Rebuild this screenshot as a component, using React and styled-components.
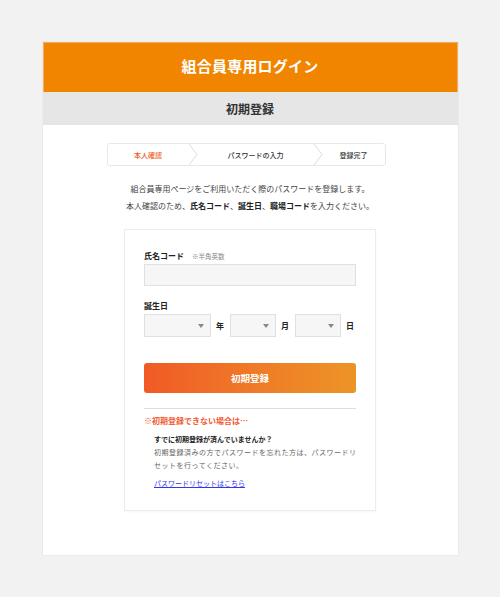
import React from 'react';
import styled, { createGlobalStyle } from 'styled-components';

const GlobalStyle = createGlobalStyle`
  html, body { margin: 0; padding: 0; background: #f2f2f2; }
  body {
    font-family: "Noto Sans CJK JP", "Noto Sans", "Liberation Sans", sans-serif;
    color: #333;
  }
  * { box-sizing: border-box; }
`;

const Page = styled.div`
  padding: 42px 0 42px;
  display: flex;
  justify-content: center;
`;

const Card = styled.main`
  width: 415px;
  background: #fff;
  box-shadow: 0 0 0 1px #ebebeb;
  padding-bottom: 44px;
`;

const Header = styled.header`
  height: 50px;
  background: #f18500;
  box-shadow: inset 1px 1px 0 #f5ad63, inset -1px 0 0 #f5ad63;
  display: flex;
  align-items: center;
  justify-content: center;
  color: #fff;
  font-size: 15px;
  line-height: 20px;
  font-weight: 700;
  letter-spacing: 0.2px;
  padding-bottom: 3px;
`;

const SubHeader = styled.div`
  height: 33px;
  background: #e6e6e6;
  display: flex;
  align-items: center;
  justify-content: center;
  font-size: 12px;
  font-weight: 700;
  color: #333;
`;

const Body = styled.div`
  padding-top: 18px;
  display: flex;
  flex-direction: column;
  align-items: center;
`;

const Steps = styled.ol`
  list-style: none;
  margin: 0 8px 0 0;
  padding: 0;
  width: 279px;
  height: 23px;
  border: 1px solid #e8e8e8;
  border-radius: 3px;
  display: flex;
  align-items: stretch;
  overflow: hidden;
`;

const Step = styled.li`
  width: ${p => p.$w}px;
  display: flex;
  align-items: center;
  justify-content: center;
  font-size: 7px;
  color: ${p => (p.$active ? '#f15a24' : '#333')};
  font-weight: 500;
`;

const ChevronSvg = styled.svg`
  width: 9px;
  height: 21px;
  flex: none;
  display: block;
`;

const Chevron = () => (
  <ChevronSvg viewBox="0 0 9 21" preserveAspectRatio="none">
    <polyline points="0,0 8,10.5 0,21" fill="none" stroke="#dcdcdc" strokeWidth="1" />
  </ChevronSvg>
);

const Intro = styled.p`
  margin: 14px 0 0;
  font-size: 8px;
  line-height: 17px;
  color: #444;
  text-align: center;
  b { font-weight: 700; color: #222; }
`;

const FormCard = styled.section`
  margin-top: 15px;
  width: 252px;
  border: 1px solid #ececec;
  box-shadow: 0 1px 2px rgba(0, 0, 0, 0.04);
  padding: 19px 19px 20px;
`;

const Label = styled.div`
  display: flex;
  align-items: baseline;
  gap: 8px;
  font-size: 8px;
  line-height: 14px;
  font-weight: 700;
  color: #222;
  margin-top: ${p => p.$mt || 0}px;
`;

const Note = styled.span`
  font-size: 6.5px;
  font-weight: 400;
  color: #888;
`;

const TextInput = styled.div`
  margin-top: 1px;
  height: 22px;
  background: #f6f6f6;
  border: 1px solid #e0e0e0;
`;

const DateRow = styled.div`
  margin-top: 1px;
  display: flex;
  align-items: center;
`;

const SelectBox = styled.div`
  width: ${p => p.$w}px;
  height: 23px;
  background: #f6f6f6;
  border: 1px solid #e0e0e0;
  display: flex;
  align-items: center;
  justify-content: flex-end;
  padding-right: 6px;
`;

const Caret = styled.span`
  width: 0;
  height: 0;
  border-left: 3.5px solid transparent;
  border-right: 3.5px solid transparent;
  border-top: 4px solid #888;
`;

const Unit = styled.span`
  font-size: 8px;
  font-weight: 700;
  color: #222;
  margin: 0 ${p => p.$mr || 0}px 0 ${p => p.$ml || 0}px;
`;

const Button = styled.div`
  margin-top: 26px;
  height: 30px;
  border-radius: 3px;
  background: linear-gradient(90deg, #f15a26 0%, #ef7c27 55%, #ed9426 100%);
  display: flex;
  align-items: center;
  justify-content: center;
  color: #fff;
  font-size: 9.5px;
  font-weight: 700;
`;

const Divider = styled.hr`
  margin: 15px 0 0;
  border: none;
  border-top: 1px solid #dedede;
`;

const Warn = styled.div`
  margin-top: 5px;
  font-size: 8px;
  line-height: 14px;
  font-weight: 700;
  color: #f05a30;
`;

const Help = styled.div`
  margin-top: 4px;
  padding-left: 10px;
  margin-right: -2px;
`;

const HelpTitle = styled.div`
  font-size: 7px;
  line-height: 14px;
  font-weight: 700;
  color: #222;
`;

const HelpText = styled.p`
  margin: 0;
  font-size: 7px;
  line-height: 13px;
  letter-spacing: 0.5px;
  color: #666;
  white-space: nowrap;
`;

const Link = styled.a`
  display: block;
  width: fit-content;
  margin-top: 4px;
  font-size: 7px;
  line-height: 14px;
  color: #3535f0;
  text-decoration: underline;
`;

export default function App() {
  return (
    <>
      <GlobalStyle />
      <Page>
        <Card>
          <Header>組合員専用ログイン</Header>
          <SubHeader>初期登録</SubHeader>
          <Body>
            <Steps>
              <Step $w={81} $active>本人確認</Step>
              <Chevron />
              <Step $w={116}>パスワードの入力</Step>
              <Chevron />
              <Step $w={62}>登録完了</Step>
            </Steps>
            <Intro>
              組合員専用ページをご利用いただく際のパスワードを登録します。
              <br />
              本人確認のため、<b>氏名コード</b>、<b>誕生日</b>、<b>職場コード</b>を入力ください。
            </Intro>
            <FormCard>
              <Label>
                氏名コード<Note>※半角英数</Note>
              </Label>
              <TextInput />
              <Label $mt={13}>誕生日</Label>
              <DateRow>
                <SelectBox $w={67}><Caret /></SelectBox>
                <Unit $ml={5} $mr={6}>年</Unit>
                <SelectBox $w={46}><Caret /></SelectBox>
                <Unit $ml={5} $mr={6}>月</Unit>
                <SelectBox $w={46}><Caret /></SelectBox>
                <Unit $ml={5}>日</Unit>
              </DateRow>
              <Button>初期登録</Button>
              <Divider />
              <Warn>※初期登録できない場合は…</Warn>
              <Help>
                <HelpTitle>すでに初期登録が済んでいませんか？</HelpTitle>
                <HelpText>
                  初期登録済みの方でパスワードを忘れた方は、パスワードリ
                  <br />
                  セットを行ってください。
                </HelpText>
                <Link href="#">パスワードリセットはこちら</Link>
              </Help>
            </FormCard>
          </Body>
        </Card>
      </Page>
    </>
  );
}
